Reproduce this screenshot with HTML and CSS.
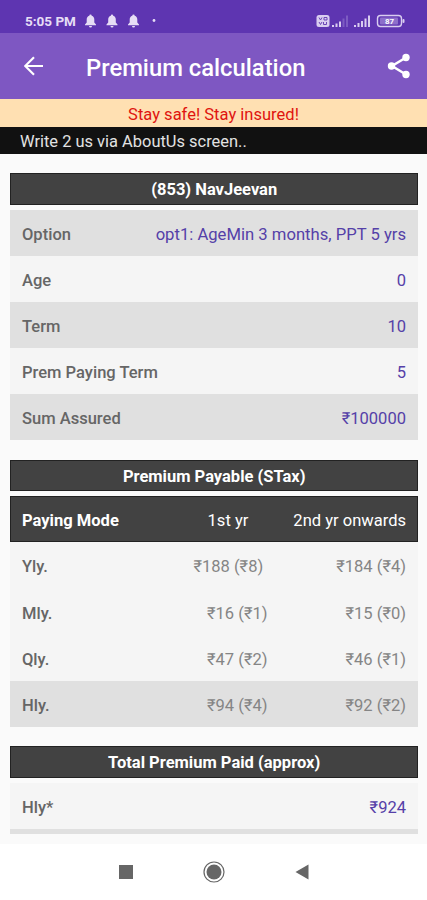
FILE: index.html
```html
<!DOCTYPE html>
<html lang="en">
<head>
  <meta charset="UTF-8" />
  <meta name="viewport" content="width=device-width, initial-scale=1.0" />
  <title>Premium calculation</title>
  <link rel="stylesheet" href="styles.css">
</head>
<body>
  <div class="screen">
    <div class="status-bar">
      <span class="clock">5:05 PM</span>
      <svg class="bells" width="76" height="14" viewBox="0 0 76 14">
        <defs>
          <path id="bell" d="M5.5 0.5a1.2 1.2 0 0 1 1.2 1.2C8.500 2.300 9.300 3.800 9.300 5.500V8.500L11 10.500V11.200H0V10.500L1.700 8.500V5.500C1.700 3.800 2.500 2.300 4.300 1.700A1.200 1.200 0 0 1 5.500 0.500ZM4 12H7A1.500 1.500 0 0 1 4 12Z" />
        </defs>
        <use href="#bell" x="0" />
        <use href="#bell" x="21.500" />
        <use href="#bell" x="43" />
        <circle cx="69" cy="6.500" r="1.400" />
      </svg>
      <svg class="signals" width="90" height="14" viewBox="0 0 90 14">
        <rect x="0.500" y="1" width="13" height="12" rx="2.500" fill="#d9cdf0" />
        <path d="M3 3.500l1.500 2.500L6 3.500M8 3.500h3v2.500H8zM3 8l1.500 2.500L6 8M7.500 8v2.500h3V8" fill="none" stroke="#6b45b5" />
        <path d="M16 11h2v2h-2zM19.500 9.500h2V13h-2zM23 7.500h2V13h-2z" fill="#d9cdf0" />
        <path d="M26.500 4.500h2V13h-2zM30 1.500h2V13h-2z" fill="#7d5cc2" />
        <path d="M38 11h2v2h-2zM41.500 9h2v4h-2zM45 7h2v6h-2zM48.500 4.500h2V13h-2zM52 1.500h2V13h-2z" fill="#d9cdf0" />
        <rect x="61.500" y="1.500" width="24" height="11" rx="3" fill="none" stroke="#d9cdf0" stroke-width="1.400" />
        <rect x="64" y="3.500" width="18" height="7" rx="1" fill="#8d6fcb" />
        <rect x="86.500" y="5" width="2" height="4" rx="1" fill="#d9cdf0" />
        <text class="battery" x="73.500" y="10" text-anchor="middle">87</text>
      </svg>
    </div>

    <div class="app-bar">
      <svg class="back" width="20" height="20" viewBox="0 0 20 20">
        <path d="M19 10H1.500M10 1.200L1.200 10L10 18.800" />
      </svg>
      <h1>Premium calculation</h1>
      <svg class="share" width="24" height="26" viewBox="0 0 24 26">
        <path d="M19 4.500L5 13L19 21.500" />
        <circle cx="19" cy="4.500" r="3.700" />
        <circle cx="4.500" cy="13" r="3.700" />
        <circle cx="19" cy="21.500" r="3.700" />
      </svg>
    </div>

    <div class="notice">Stay safe! Stay insured!</div>
    <div class="ticker">Write 2 us via AboutUs screen..</div>

    <div class="content">
      <section>
        <h2>(853) NavJeevan</h2>
        <div class="row alt"><span class="label">Option</span><span class="value option">opt1: AgeMin 3 months, PPT 5 yrs</span></div>
        <div class="row"><span class="label">Age</span><span class="value">0</span></div>
        <div class="row alt"><span class="label">Term</span><span class="value">10</span></div>
        <div class="row"><span class="label">Prem Paying Term</span><span class="value">5</span></div>
        <div class="row alt"><span class="label">Sum Assured</span><span class="value">₹100000</span></div>
      </section>

      <section>
        <h2>Premium Payable (STax)</h2>
        <div class="row head"><span class="label">Paying Mode</span><span class="first">1st yr</span><span class="next">2nd yr onwards</span></div>
        <div class="row yearly"><span class="label">Yly.</span><span class="first">₹188 (₹8)</span><span class="next">₹184 (₹4)</span></div>
        <div class="row"><span class="label">Mly.</span><span class="first">₹16 (₹1)</span><span class="next">₹15 (₹0)</span></div>
        <div class="row"><span class="label">Qly.</span><span class="first">₹47 (₹2)</span><span class="next">₹46 (₹1)</span></div>
        <div class="row alt"><span class="label">Hly.</span><span class="first">₹94 (₹4)</span><span class="next">₹92 (₹2)</span></div>
      </section>

      <section>
        <h2>Total Premium Paid (approx)</h2>
        <div class="row"><span class="label">Hly*</span><span class="value">₹924</span></div>
        <div class="row alt"></div>
      </section>
    </div>

    <div class="nav-bar">
      <svg width="14" height="14" viewBox="0 0 14 14"><rect width="14" height="14" /></svg>
      <svg width="24" height="24" viewBox="0 0 24 24">
        <circle class="ring" cx="12" cy="12" r="10" />
        <circle cx="12" cy="12" r="7.500" />
      </svg>
      <svg width="14" height="16" viewBox="0 0 14 16"><path d="M13.500 0.500V15.500L0.500 8Z" /></svg>
    </div>
  </div>
</body>
</html>
```
FILE: styles.css
```css
* {
  box-sizing: border-box;
}
body {
  margin: 0;
  font-family: Roboto, "Noto Sans", sans-serif;
  font-size: 16.55px;
  background-color: #fafafa;
}
.screen {
  display: flex;
  flex-direction: column;
  height: 900px;
  overflow: hidden;
}
.status-bar {
  display: flex;
  align-items: center;
  flex: none;
  height: 33px;
  padding: 9px 21px 0 25px;
  background-color: #5e35b1;
  color: #e6ddf5;
}
.clock {
  width: 60px;
  font-size: 13.5px;
  font-weight: 700;
  white-space: nowrap;
}
.bells {
  fill: #e6ddf5;
}
.signals {
  margin-left: auto;
}
.battery {
  font-size: 8px;
  font-weight: 700;
  fill: #fff;
}
.app-bar {
  display: flex;
  align-items: center;
  flex: none;
  height: 66px;
  padding: 0 16px 0 24px;
  background-color: #7e57c2;
  color: #fff;
}
.back {
  fill: none;
  stroke: #fff;
  stroke-width: 2.2;
}
.share {
  margin-left: auto;
  fill: #fff;
}
.share path {
  fill: none;
  stroke: #fff;
  stroke-width: 2.5;
}
h1 {
  margin: 3px 0 0 42px;
  font-size: 23.8px;
  font-weight: 500;
  line-height: 30px;
  white-space: nowrap;
}
.notice {
  flex: none;
  height: 28px;
  line-height: 31px;
  text-align: center;
  background-color: #ffe0b2;
  color: #e0140f;
}
.ticker {
  flex: none;
  height: 26.5px;
  padding-left: 20px;
  font-size: 16.45px;
  line-height: 29px;
  background-color: #111;
  color: #e2e2e2;
}
.content {
  flex: 1;
  min-height: 0;
  padding: 19.5px 9px 10px 10.4px;
  overflow: hidden;
}
section {
  margin-bottom: 19.2px;
}
section:last-child {
  height: 87.5px;
  margin-bottom: 0;
  overflow: hidden;
}
h2 {
  height: 31.5px;
  margin: 0 0 5px;
  border: 1px solid #222;
  font-size: 16.5px;
  font-weight: 700;
  line-height: 31px;
  text-align: center;
  background-color: #424242;
  color: #fff;
}
.row {
  display: flex;
  align-items: center;
  height: 46.2px;
  padding: 3px 12px 0 11.6px;
  background-color: #f5f5f5;
  color: #858585;
  white-space: nowrap;
}
.alt {
  background-color: #e0e0e0;
}
.label {
  flex: 1;
  font-weight: 500;
  color: #666;
}
.value {
  color: #5540a8;
}
.option {
  font-size: 16.65px;
}
.first {
  margin-right: 78px;
}
.yearly .first {
  margin-right: 73px;
}
.head {
  padding: 2px 11px 0 10.6px;
  border: 1px solid #222;
  background-color: #424242;
  color: #fff;
}
.head .label {
  font-weight: 700;
  color: #fff;
}
.head .first {
  margin-right: 45px;
}
.nav-bar {
  display: flex;
  align-items: center;
  justify-content: center;
  gap: 69px;
  flex: none;
  height: 56.5px;
  background-color: #fff;
  fill: #666;
}
.ring {
  fill: none;
  stroke: #666;
  stroke-width: 1.2;
}
```
